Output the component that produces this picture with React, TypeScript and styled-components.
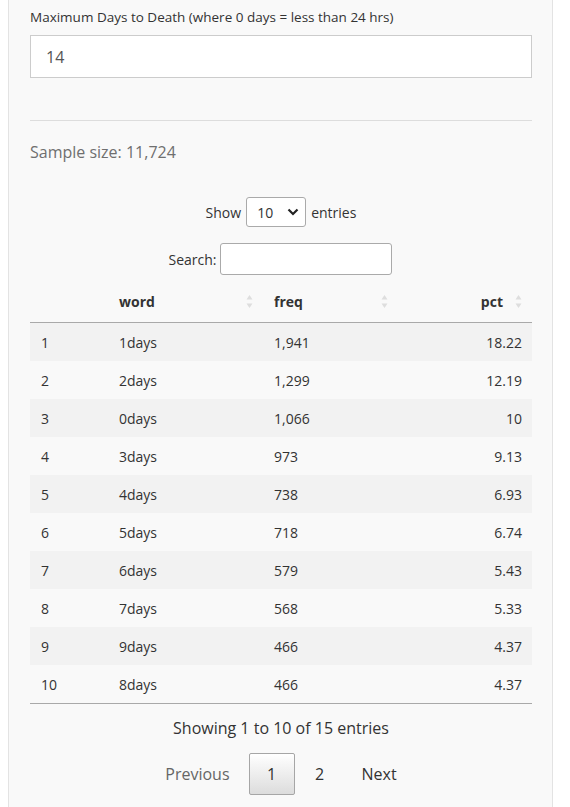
import React from 'react'
import styled, { createGlobalStyle } from 'styled-components'

const GlobalStyle = createGlobalStyle`
  html, body {
    margin: 0;
    padding: 0;
    background: #ffffff;
  }
  body {
    font-family: 'Open Sans', 'DejaVu Sans', sans-serif;
    color: #333333;
    font-size: 14px;
  }
`

type Row = {
  id: number
  word: string
  freq: string
  pct: string
}

const rows: Row[] = [
  { id: 1, word: '1days', freq: '1,941', pct: '18.22' },
  { id: 2, word: '2days', freq: '1,299', pct: '12.19' },
  { id: 3, word: '0days', freq: '1,066', pct: '10' },
  { id: 4, word: '3days', freq: '973', pct: '9.13' },
  { id: 5, word: '4days', freq: '738', pct: '6.93' },
  { id: 6, word: '5days', freq: '718', pct: '6.74' },
  { id: 7, word: '6days', freq: '579', pct: '5.43' },
  { id: 8, word: '7days', freq: '568', pct: '5.33' },
  { id: 9, word: '9days', freq: '466', pct: '4.37' },
  { id: 10, word: '8days', freq: '466', pct: '4.37' },
]

const Page = styled.div`
  padding: 0 17px 0 8px;
`

const Well = styled.div`
  background: #f9f9f9;
  border: 1px solid #e3e3e3;
  border-top: none;
  padding: 7px 20px 30px 21px;
`

const Label = styled.label`
  display: block;
  font-size: 13.5px;
  line-height: 20px;
  color: #333;
  margin-bottom: 8px;
`

const TextInput = styled.div`
  height: 41px;
  border: 1px solid #cccccc;
  background: #ffffff;
  padding: 0 15px;
  display: flex;
  align-items: center;
  font-size: 16px;
  color: #555555;
`

const Rule = styled.hr`
  border: none;
  border-top: 1px solid #dddddd;
  margin: 42px 0 20px;
`

const SampleSize = styled.div`
  font-size: 16px;
  line-height: 22px;
  color: #6f6f6f;
  margin-bottom: 34px;
  margin-top: 1px;
`

const Controls = styled.div`
  display: flex;
  flex-direction: column;
  align-items: center;
  gap: 16px;
  margin-bottom: 5px;
`

const ControlLine = styled.div<{ $shift?: number }>`
  display: flex;
  align-items: center;
  gap: 3px;
  font-size: 14px;
  color: #333;
  margin-left: ${(p) => p.$shift ?? 0}px;
`

const Select = styled.div`
  width: 60px;
  height: 30px;
  box-sizing: border-box;
  border: 1px solid #aaaaaa;
  border-radius: 3px;
  background: #ffffff;
  display: flex;
  align-items: center;
  justify-content: space-between;
  padding: 0 6px 0 10px;
  margin: 0 2px;
  font-size: 14px;
  color: #333;
`

const SearchBox = styled.div`
  width: 172px;
  height: 32px;
  box-sizing: border-box;
  border: 1px solid #aaaaaa;
  border-radius: 3px;
  background: #ffffff;
`

const Table = styled.table`
  width: 100%;
  table-layout: fixed;
  border-collapse: collapse;
  font-size: 14px;
  color: #333;
`

const HeadCell = styled.th<{ $w?: number; $right?: boolean }>`
  width: ${(p) => (p.$w ? `${p.$w}px` : 'auto')};
  height: 42px;
  padding: 0 10px 0 11px;
  font-weight: 700;
  text-align: ${(p) => (p.$right ? 'right' : 'left')};
  border-bottom: 1px solid #a9a9a9;
`

const HeadInner = styled.div<{ $right?: boolean }>`
  display: flex;
  align-items: center;
  justify-content: ${(p) => (p.$right ? 'flex-end' : 'space-between')};
  gap: 12px;
`

const BodyRow = styled.tr<{ $odd: boolean }>`
  background: ${(p) => (p.$odd ? '#f2f2f2' : '#f9f9f9')};
  & + & td {
    border-top: 1px solid #dddddd;
  }
  &:last-child td {
    border-bottom: 1px solid #a9a9a9;
  }
`

const Cell = styled.td<{ $right?: boolean }>`
  height: 38px;
  padding: 0 10px 0 11px;
  text-align: ${(p) => (p.$right ? 'right' : 'left')};
`

const Info = styled.div`
  text-align: center;
  font-size: 16px;
  color: #333;
  margin-top: 13px;
  line-height: 22px;
`

const Pager = styled.div`
  display: flex;
  justify-content: center;
  align-items: center;
  gap: 2px;
  margin-top: 14px;
`

const PageButton = styled.div<{ $current?: boolean; $disabled?: boolean }>`
  box-sizing: border-box;
  height: 42px;
  min-width: 46px;
  display: flex;
  align-items: center;
  justify-content: center;
  padding: 0 16px;
  font-size: 16px;
  color: ${(p) => (p.$disabled ? '#666666' : '#333333')};
  border: 1px solid ${(p) => (p.$current ? '#a6a6a6' : 'transparent')};
  border-radius: 2px;
  background: ${(p) =>
    p.$current ? 'linear-gradient(to bottom, #ffffff 0%, #dcdcdc 100%)' : 'transparent'};
`

const SortIcon = () => (
  <svg width="7" height="15" viewBox="0 0 7 15">
    <path d="M3.5 1 L6.5 5.5 L0.5 5.5 Z" fill="#dedede" />
    <path d="M3.5 14 L6.5 9.5 L0.5 9.5 Z" fill="#dedede" />
  </svg>
)

const Chevron = () => (
  <svg width="12" height="8" viewBox="0 0 12 8">
    <path d="M1.5 1.5 L6 6 L10.5 1.5" fill="none" stroke="#222" strokeWidth="2.2" />
  </svg>
)

const App = () => {
  return (
    <Page>
      <GlobalStyle />
      <Well>
        <Label>Maximum Days to Death (where 0 days = less than 24 hrs)</Label>
        <TextInput>14</TextInput>
        <Rule />
        <SampleSize>Sample size: 11,724</SampleSize>
        <Controls>
          <ControlLine $shift={0}>
            Show
            <Select>
              10
              <Chevron />
            </Select>
            entries
          </ControlLine>
          <ControlLine $shift={-2}>
            Search:
            <SearchBox />
          </ControlLine>
        </Controls>
        <Table>
          <colgroup>
            <col style={{ width: 78 }} />
            <col style={{ width: 155 }} />
            <col style={{ width: 135 }} />
            <col />
          </colgroup>
          <thead>
            <tr>
              <HeadCell></HeadCell>
              <HeadCell>
                <HeadInner>
                  word
                  <SortIcon />
                </HeadInner>
              </HeadCell>
              <HeadCell>
                <HeadInner>
                  freq
                  <SortIcon />
                </HeadInner>
              </HeadCell>
              <HeadCell $right>
                <HeadInner $right>
                  pct
                  <SortIcon />
                </HeadInner>
              </HeadCell>
            </tr>
          </thead>
          <tbody>
            {rows.map((r, i) => (
              <BodyRow key={r.id} $odd={i % 2 === 0}>
                <Cell>{r.id}</Cell>
                <Cell>{r.word}</Cell>
                <Cell>{r.freq}</Cell>
                <Cell $right>{r.pct}</Cell>
              </BodyRow>
            ))}
          </tbody>
        </Table>
        <Info>Showing 1 to 10 of 15 entries</Info>
        <Pager>
          <PageButton $disabled>Previous</PageButton>
          <PageButton $current>1</PageButton>
          <PageButton>2</PageButton>
          <PageButton>Next</PageButton>
        </Pager>
      </Well>
    </Page>
  )
}

export default App
